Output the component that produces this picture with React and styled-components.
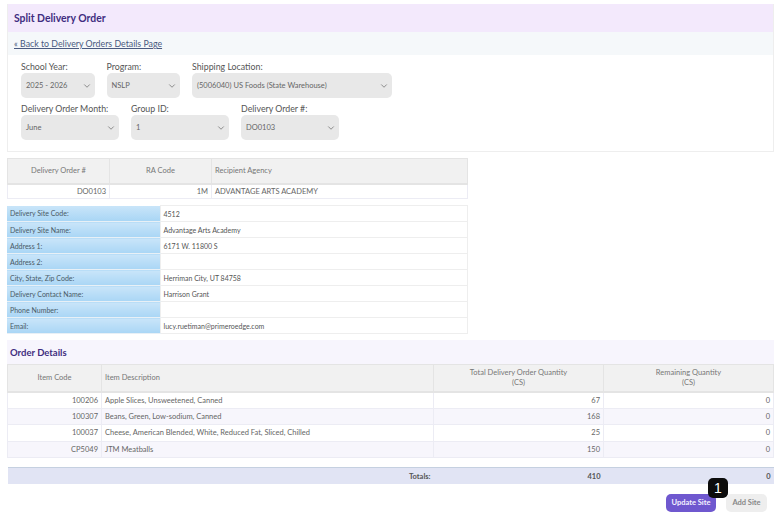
import React from 'react';
import styled, { createGlobalStyle } from 'styled-components';
import { ChevronDown } from 'lucide-react';

const GlobalStyle = createGlobalStyle`
  html, body { margin: 0; padding: 0; background: #fff; }
  body { font-family: "Lato", "Noto Sans", sans-serif; color: #555; }
  * { box-sizing: border-box; }
`;

const Page = styled.div`
  width: 780px;
  height: 516px;
  overflow: hidden;
  padding: 4px 6px 0 7px;
`;

const Panel = styled.section`
  border: 1px solid #eeeeee;
  border-top: 0;
  height: 148px;
`;

const PanelTitle = styled.h1`
  margin: 0;
  height: 28px;
  padding: 0 6px;
  display: flex;
  align-items: center;
  background: #f3e9fc;
  color: #3f2d80;
  font-size: 10.4px;
  font-weight: 700;
`;

const BackBar = styled.div`
  height: 23px;
  padding: 0 6px;
  display: flex;
  align-items: center;
  background: #f5f8fa;
`;

const BackLink = styled.a`
  color: #4a5a80;
  font-size: 8.8px;
  text-decoration: underline;
`;

const Form = styled.div`
  padding: 6px 13px 0;
  display: flex;
  flex-direction: column;
  gap: 5px;
`;

const FormRow = styled.div`
  display: flex;
  gap: 12px;
`;

const Field = styled.label`
  display: flex;
  flex-direction: column;
  width: ${({ width }) => width}px;
  color: #555;
  font-size: 8.8px;
  line-height: 12px;
`;

const Select = styled.div`
  height: 25px;
  padding: 0 3px 0 5px;
  display: flex;
  align-items: center;
  justify-content: space-between;
  background: #e8e8e8;
  border-radius: 5px;
  color: #666;
  font-size: 7.5px;
  white-space: nowrap;
`;

const Table = styled.table`
  border-collapse: collapse;
  table-layout: fixed;
  width: ${({ width }) => width}px;
  margin-top: ${({ top }) => top}px;
  font-size: 7.5px;
  color: #666;
`;

const Th = styled.th`
  height: ${({ height }) => height}px;
  padding: 1px 3px 0;
  background: #f1f1f1;
  border: 1px solid #e4e4e4;
  border-bottom-width: 2px;
  color: #777;
  font-weight: 400;
  line-height: 10px;
  text-align: ${({ align }) => align || 'center'};
`;

const Td = styled.td`
  height: ${({ height }) => height || 16}px;
  padding: 0 3px;
  border: 1px solid #ececf4;
  white-space: nowrap;
  text-align: ${({ align }) => align || 'left'};
`;

const ItemRow = styled.tr`
  background: ${({ odd }) => (odd ? '#ffffff' : '#f7f6fc')};
`;

const SiteLabel = styled.td`
  height: 16px;
  padding: 0 3px;
  background: linear-gradient(#c9e5f9, #a9d6f5);
  border-bottom: 1px solid #e8f0f6;
  color: #4a5a66;
  font-size: 7px;
`;

const SiteValue = styled.td`
  height: 16px;
  padding: 0 3px;
  border: 1px solid #eeeeee;
  color: #555;
  font-size: 7px;
`;

const SectionTitle = styled.h2`
  margin: 6px 0 0;
  height: 24px;
  padding: 0 3px;
  display: flex;
  align-items: center;
  background: #f7f5fd;
  color: #3f2d80;
  font-size: 9.5px;
  font-weight: 700;
`;

const TotalRow = styled.tr`
  background: #e1e4f4;
  border-top: 1px solid #c5d0e0;
  color: #555;
  font-weight: 700;
`;

const TotalCell = styled.td`
  height: 16px;
  padding: 0 3px;
  text-align: right;
`;

const SpacerCell = styled.td`
  height: 10px;
  padding: 0;
`;

const Actions = styled.div`
  margin-top: 10px;
  padding-right: 7px;
  display: flex;
  justify-content: flex-end;
  gap: 10px;
`;

const Button = styled.button`
  position: relative;
  height: 18px;
  width: ${({ width }) => width}px;
  padding: 0;
  border: 0;
  border-radius: 5px;
  background: ${({ primary }) => (primary ? '#6f58cf' : '#eeeeee')};
  color: ${({ primary }) => (primary ? '#f4f2ff' : '#888')};
  font-family: inherit;
  font-size: 7.5px;
  font-weight: 700;
`;

const Badge = styled.span`
  position: absolute;
  top: -16px;
  right: -12px;
  width: 20px;
  height: 20px;
  display: flex;
  align-items: center;
  justify-content: center;
  border-radius: 5px;
  background: #0c0c0c;
  color: #fff;
  font-family: "Liberation Sans", sans-serif;
  font-size: 14px;
  font-weight: 400;
`;

const firstRow = [
  { label: 'School Year:', value: '2025 - 2026', width: 73.5 },
  { label: 'Program:', value: 'NSLP', width: 73.5 },
  { label: 'Shipping Location:', value: '(5006040) US Foods (State Warehouse)', width: 200 },
];

const secondRow = [
  { label: 'Delivery Order Month:', value: 'June', width: 98 },
  { label: 'Group ID:', value: '1', width: 98 },
  { label: 'Delivery Order #:', value: 'DO0103', width: 98 },
];

const siteRows = [
  ['Delivery Site Code:', '4512'],
  ['Delivery Site Name:', 'Advantage Arts Academy'],
  ['Address 1:', '6171 W. 11800 S'],
  ['Address 2:', ''],
  ['City, State, Zip Code:', 'Herriman City, UT 84758'],
  ['Delivery Contact Name:', 'Harrison Grant'],
  ['Phone Number:', ''],
  ['Email:', 'lucy.ruetiman@primeroedge.com'],
];

const items = [
  ['100206', 'Apple Slices, Unsweetened, Canned', 67, 0],
  ['100307', 'Beans, Green, Low-sodium, Canned', 168, 0],
  ['100037', 'Cheese, American Blended, White, Reduced Fat, Sliced, Chilled', 25, 0],
  ['CP5049', 'JTM Meatballs', 150, 0],
];

const FieldGroup = ({ fields }) => (
  <FormRow>
    {fields.map((f) => (
      <Field key={f.label} width={f.width}>
        {f.label}
        <Select>
          {f.value}
          <ChevronDown size={10} strokeWidth={1.5} color="#555" />
        </Select>
      </Field>
    ))}
  </FormRow>
);

export default function App() {
  return (
    <Page>
      <GlobalStyle />
      <Panel>
        <PanelTitle>Split Delivery Order</PanelTitle>
        <BackBar>
          <BackLink href="#">« Back to Delivery Orders Details Page</BackLink>
        </BackBar>
        <Form>
          <FieldGroup fields={firstRow} />
          <FieldGroup fields={secondRow} />
        </Form>
      </Panel>

      <Table width={460} top={6}>
        <colgroup>
          <col width="102" />
          <col width="102" />
          <col width="256" />
        </colgroup>
        <thead>
          <tr>
            <Th height={25}>Delivery Order #</Th>
            <Th height={25}>RA Code</Th>
            <Th height={25} align="left">Recipient Agency</Th>
          </tr>
        </thead>
        <tbody>
          <tr>
            <Td height={15} align="right">DO0103</Td>
            <Td height={15} align="right">1M</Td>
            <Td height={15}>ADVANTAGE ARTS ACADEMY</Td>
          </tr>
        </tbody>
      </Table>

      <Table width={460} top={6}>
        <colgroup>
          <col width="153" />
          <col width="307" />
        </colgroup>
        <tbody>
          {siteRows.map(([label, value]) => (
            <tr key={label}>
              <SiteLabel>{label}</SiteLabel>
              <SiteValue>{value}</SiteValue>
            </tr>
          ))}
        </tbody>
      </Table>

      <SectionTitle>Order Details</SectionTitle>
      <Table width={766} top={0}>
        <colgroup>
          <col width="94" />
          <col width="332" />
          <col width="170" />
          <col width="170" />
        </colgroup>
        <thead>
          <tr>
            <Th height={27}>Item Code</Th>
            <Th height={27} align="left">Item Description</Th>
            <Th height={27}>Total Delivery Order Quantity<br />(CS)</Th>
            <Th height={27}>Remaining Quantity<br />(CS)</Th>
          </tr>
        </thead>
        <tbody>
          {items.map(([code, desc, total, remaining], i) => (
            <ItemRow key={code} odd={i % 2 === 0}>
              <Td height={16.6} align="right">{code}</Td>
              <Td height={16.6}>{desc}</Td>
              <Td height={16.6} align="right">{total}</Td>
              <Td height={16.6} align="right">{remaining}</Td>
            </ItemRow>
          ))}
          <tr>
            <SpacerCell colSpan={4} />
          </tr>
          <TotalRow>
            <TotalCell colSpan={2}>Totals:</TotalCell>
            <TotalCell>410</TotalCell>
            <TotalCell>0</TotalCell>
          </TotalRow>
        </tbody>
      </Table>

      <Actions>
        <Button primary width={50}>
          Update Site
          <Badge>1</Badge>
        </Button>
        <Button width={41}>Add Site</Button>
      </Actions>
    </Page>
  );
}
